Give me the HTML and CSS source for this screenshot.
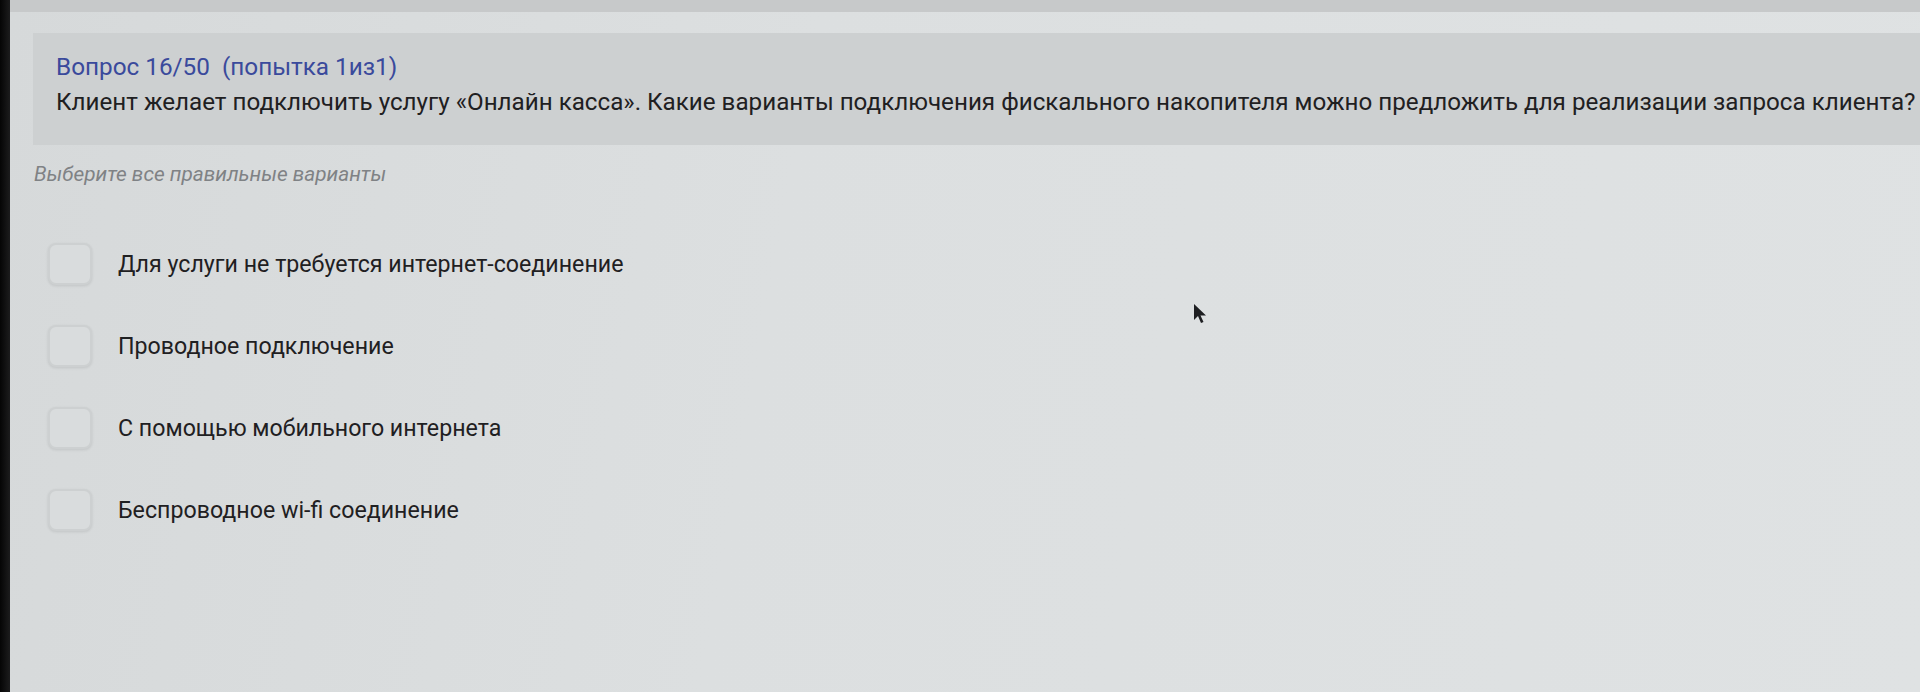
FILE: index.html
```html
<!DOCTYPE html>
<html lang="ru">
<head>
<meta charset="utf-8">
<title>Вопрос 16/50</title>
<link rel="stylesheet" href="styles.css">
</head>
<body>
<div class="frame">
  <div class="bezel"></div>
  <div class="screen">
    <div class="topbar"></div>
    <div class="content">
      <div class="question-box">
        <div class="q-title">Вопрос 16/50&nbsp; (попытка 1из1)</div>
        <div class="q-text">Клиент желает подключить услугу «Онлайн касса». Какие варианты подключения фискального накопителя можно предложить для реализации запроса клиента?</div>
      </div>
      <div class="hint">Выберите все правильные варианты</div>
      <ul class="options">
        <li class="option"><span class="check"></span><span class="label">Для услуги не требуется интернет-соединение</span></li>
        <li class="option"><span class="check"></span><span class="label">Проводное подключение</span></li>
        <li class="option"><span class="check"></span><span class="label">С помощью мобильного интернета</span></li>
        <li class="option"><span class="check"></span><span class="label">Беспроводное wi-fi соединение</span></li>
      </ul>
    </div>
    <svg class="cursor" width="16" height="22" viewBox="0 0 16 22"><path d="M1 1 L1 17 L5 13 L8 20 L10.5 19 L7.5 12.5 L13 12.5 Z" fill="#1e1f22"/></svg>
  </div>
</div>
</body>
</html>
```
FILE: styles.css
```css
* { box-sizing: border-box; }
html, body {
  margin: 0;
  padding: 0;
  width: 1920px;
  height: 692px;
  overflow: hidden;
  background: #0d0d0e;
  font-family: Roboto, "Noto Sans", "Liberation Sans", sans-serif;
}
.frame {
  display: flex;
  width: 1920px;
  height: 692px;
}
.bezel {
  width: 10px;
  flex: none;
  background: linear-gradient(to right, #050505, #1c1c1d);
}
.screen {
  position: relative;
  flex: 1;
  display: flex;
  flex-direction: column;
  background: linear-gradient(100deg, #d6d9da 0%, #dcdfe0 40%, #dfe2e3 100%);
}
.topbar {
  height: 12px;
  flex: none;
  background: #c7c9ca;
}
.content {
  padding: 21px 0 0 23px;
}
.question-box {
  height: 112px;
  padding: 20px 0 0 23px;
  background: #cdd0d1;
  white-space: nowrap;
  overflow: hidden;
}
.q-title {
  font-size: 24.3px;
  line-height: 28px;
  color: #3a4a9c;
}
.q-text {
  margin-top: 6px;
  font-size: 24.2px;
  line-height: 30px;
  color: #1f2022;
}
.hint {
  margin: 17px 0 0 1px;
  font-size: 20.8px;
  line-height: 24px;
  font-style: italic;
  color: #7f8285;
}
.options {
  list-style: none;
  margin: 57px 0 0 15px;
  padding: 0;
  display: flex;
  flex-direction: column;
  gap: 40px;
}
.option {
  display: flex;
  align-items: center;
  height: 42px;
}
.check {
  width: 44px;
  height: 42px;
  flex: none;
  border: 2px solid #cdd0d1;
  border-radius: 8px;
  background: #d9dcdd;
  box-shadow: 0 1px 3px rgba(0,0,0,0.1);
}
.label {
  margin-left: 26px;
  font-size: 23.2px;
  line-height: 28px;
  color: #1f2022;
}
.cursor {
  position: absolute;
  left: 1183px;
  top: 303px;
}
```
